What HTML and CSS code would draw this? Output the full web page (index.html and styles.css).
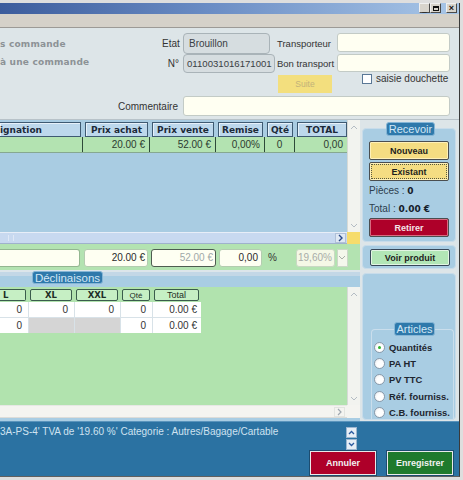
FILE: index.html
```html
<!DOCTYPE html>
<html>
<head>
<meta charset="utf-8">
<link rel="stylesheet" href="styles.css">
</head>
<body>
<div class="window">
  <div class="titlebar">
    <div class="winbtns">
      <span class="wb">_</span><span class="wb"><i class="sq"></i></span><span class="wb close">×</span>
    </div>
  </div>
  <div class="menubar"></div>

  <div class="header">
    <div class="lefttext r1">s commande</div>
    <div class="lbl r1">Etat</div>
    <div class="box etat r1">Brouillon</div>
    <div class="lbl2 r1">Transporteur</div>
    <div class="inp r1 tr">&nbsp;</div>

    <div class="lefttext r2 up">à une commande</div>
    <div class="lbl r2">N°</div>
    <div class="box num r2">0110031016171001</div>
    <div class="lbl2 r2">Bon transport</div>
    <div class="inp r2 bt">&nbsp;</div>

    <div class="suite">Suite</div>
    <div class="chk"><span class="cbox"></span><span>saisie douchette</span></div>

    <div class="comlbl">Commentaire</div>
    <div class="inp cominp">&nbsp;</div>
  </div>
  <div class="sep"></div>

  <div class="rowa">
    <div class="tablebox">
      <div class="tcontent">
        <div class="thead">
          <div class="th first">ignation</div>
          <div class="th">Prix achat</div>
          <div class="th">Prix vente</div>
          <div class="th">Remise</div>
          <div class="th">Qté</div>
          <div class="th last">TOTAL</div>
        </div>
        <div class="trow">
          <div class="td"></div>
          <div class="td">20.00 €</div>
          <div class="td">52.00 €</div>
          <div class="td">0,00%</div>
          <div class="td c">0</div>
          <div class="td">0,00</div>
        </div>
      </div>
      <div class="vscroll">
        <svg width="8" height="6" viewBox="0 0 8 6"><polyline points="1,5 4,2 7,5" fill="none" stroke="#b4bcc4" stroke-width="1"/></svg>
        <svg width="8" height="6" viewBox="0 0 8 6"><polyline points="1,1 4,4 7,1" fill="none" stroke="#b4bcc4" stroke-width="1"/></svg>
      </div>
      <div class="hscroll">
        <span class="grip"></span>
        <span class="hbtn"><svg width="6" height="8" viewBox="0 0 6 8"><polyline points="1,1 4,4 1,7" fill="none" stroke="#2a4a8a" stroke-width="1.4"/></svg></span>
      </div>
      <div class="corner"></div>
    </div>
    <div class="side sidea">
      <div class="panel recv">
        <div class="tag recvtag">Recevoir</div>
        <div class="btn yellow">Nouveau</div>
        <div class="btn yellow focus">Existant</div>
        <div class="stat s1">Pièces : <b>0</b></div>
        <div class="stat s2">Total : <b>0.00 €</b></div>
        <div class="btn red">Retirer</div>
      </div>
    </div>
  </div>

  <div class="rowb">
    <div class="bleft">
      <div class="fi f1"></div>
      <div class="fi f2">20.00 €</div>
      <div class="fi f3">52.00 €</div>
      <div class="fi f4">0,00</div>
      <div class="pct">%</div>
      <div class="fi f5">19,60%</div>
      <div class="dd"><svg width="8" height="6" viewBox="0 0 8 6"><polyline points="1,1 4,4 7,1" fill="none" stroke="#a8b0a8" stroke-width="1"/></svg></div>
    </div>
    <div class="side sideb">
      <div class="panel pb">
        <div class="btn green">Voir produit</div>
      </div>
    </div>
  </div>

  <div class="rowc">
    <div class="cleft">
      <div class="band"><div class="tag decltag">Déclinaisons</div></div>
      <div class="declbox">
        <div class="dcontent">
          <div class="dhead">
            <div class="dh dl">L</div>
            <div class="dh">XL</div>
            <div class="dh">XXL</div>
            <div class="dh small">Qté</div>
            <div class="dh reg">Total</div>
          </div>
          <div class="dgrid">
            <div class="dc">0</div><div class="dc">0</div><div class="dc">0</div><div class="dc">0</div><div class="dc">0.00 €</div>
            <div class="dc">0</div><div class="dc gray"></div><div class="dc gray"></div><div class="dc">0</div><div class="dc">0.00 €</div>
          </div>
        </div>
        <div class="vscroll">
          <svg width="8" height="6" viewBox="0 0 8 6"><polyline points="1,5 4,2 7,5" fill="none" stroke="#b4bcc4" stroke-width="1"/></svg>
          <svg width="8" height="6" viewBox="0 0 8 6"><polyline points="1,1 4,4 7,1" fill="none" stroke="#b4bcc4" stroke-width="1"/></svg>
        </div>
        <div class="hscroll light">
          <span class="hbtn"><svg width="6" height="8" viewBox="0 0 6 8"><polyline points="1,1 4,4 1,7" fill="none" stroke="#a0a8b0" stroke-width="1.2"/></svg></span>
        </div>
        <div class="corner2"></div>
      </div>
    </div>
    <div class="side sidec">
      <div class="panel pc">
        <div class="fieldset">
          <div class="tag arttag">Articles</div>
          <div class="radio on"><span class="rd"></span>Quantités</div>
          <div class="radio"><span class="rd"></span>PA HT</div>
          <div class="radio"><span class="rd"></span>PV TTC</div>
          <div class="radio"><span class="rd"></span>Réf. fourniss.</div>
          <div class="radio"><span class="rd"></span>C.B. fourniss.</div>
        </div>
      </div>
    </div>
  </div>

  <div class="footer">
    <div class="frow">
      <div class="ftext">3A-PS-4' TVA de '19.60 %' Categorie : Autres/Bagage/Cartable</div>
      <div class="spin">
        <span class="sb"><svg width="7" height="5" viewBox="0 0 7 5"><polyline points="1,4 3.5,1.5 6,4" fill="none" stroke="#2a5aa0" stroke-width="1.3"/></svg></span>
        <span class="sb"><svg width="7" height="5" viewBox="0 0 7 5"><polyline points="1,1 3.5,3.5 6,1" fill="none" stroke="#2a5aa0" stroke-width="1.3"/></svg></span>
      </div>
    </div>
    <div class="fbtns">
      <div class="fbtn cancel">Annuler</div>
      <div class="fbtn save">Enregistrer</div>
    </div>
  </div>
</div>
</body>
</html>
```

FILE: styles.css
```css
* { box-sizing: border-box; }
html, body { margin: 0; padding: 0; }
body {
  width: 463px; height: 480px; overflow: hidden;
  background: #dedede;
  font-family: "Liberation Sans", Arial, sans-serif;
  font-size: 10px; color: #2a3238;
}
.window {
  margin-top: 3px;
  width: 460px; height: 474px;
  border-right: 1px solid #3a3a3a;
  border-bottom: 1px solid #606060;
  display: flex; flex-direction: column;
  background: #dde5e8;
}
.titlebar {
  height: 11px; flex: none;
  background: linear-gradient(90deg, #3c5c9c 0%, #6a8cc4 45%, #a9c7e8 100%);
  display: flex; justify-content: flex-end; padding-right: 2px;
}
.winbtns { display: flex; height: 10px; }
.wb {
  width: 11px; height: 10px; background: #d8d4cc;
  border: 1px solid #4a4a4a; border-top-color: #f0f0f0; border-left-color: #f0f0f0;
  font-size: 8px; line-height: 7px; text-align: center; color: #111;
  display: flex; align-items: center; justify-content: center;
}
.wb .sq { width: 6px; height: 5px; border: 1px solid #111; border-top-width: 2px; display: block; }
.wb.close { margin-left: 5px; font-weight: bold; font-size: 9px; }
.menubar { height: 14px; flex: none; background: #d5d1c9; border-bottom: 1px solid #9c9a96; }

.header {
  height: 91px; flex: none;
  padding-top: 5px;
  display: grid;
  grid-template-columns: 162px 21px 92px 62px 113px;
  grid-template-rows: 21px 19px 21px 22px;
  align-items: center;
}
.lefttext {
  font-family: "DejaVu Sans", sans-serif; font-weight: bold; font-size: 9px;
  color: #8c9296; white-space: nowrap; letter-spacing: 0.2px;
}
.lefttext.up { padding-bottom: 4px; }
.lbl { text-align: right; padding-right: 4px; font-size: 10px; color: #333; }
.lbl2 { padding-left: 2px; font-size: 9.5px; color: #333; white-space: nowrap; }
.box {
  background: #d6dde0; border: 1px solid #a9b3b8; border-radius: 4px;
  padding-left: 5px; color: #3a4044; font-size: 10px; white-space: nowrap; overflow: visible;
  display: flex; align-items: center;
}
.box.etat { width: 87px; height: 21px; }
.box.num { width: 92px; height: 19px; padding-left: 3px; font-size: 9.6px; }
.inp {
  background: #fffff2; border: 1px solid #c3cbc6; border-radius: 3px;
}
.inp.tr { height: 19px; align-self: start; }
.inp.bt { height: 18px; align-self: start; }
.suite {
  grid-column: 4; grid-row: 3; align-self: start;
  margin-top: 2px; margin-left: 3px; width: 54px; height: 18px;
  background: #f3df7e; color: #c2b27a; font-size: 8.5px;
  display: flex; align-items: center; justify-content: center;
}
.chk {
  grid-column: 5; grid-row: 3; align-self: start;
  padding-left: 25px; display: flex; align-items: center; gap: 4px;
  font-size: 10px; color: #333; white-space: nowrap;
}
.cbox { width: 10px; height: 10px; background: #fff; border: 1px solid #5a7896; display: block; flex: none; }
.comlbl { grid-column: 1 / 3; grid-row: 4; text-align: right; padding-right: 5px; padding-top: 2px; color: #333; }
.cominp { grid-column: 3 / 6; grid-row: 4; height: 20px; align-self: start; margin-top: 2px; }
.sep { height: 1px; flex: none; background: #b8c2c8; }

/* row A */
.rowa { height: 124px; flex: none; display: flex; }
.tablebox {
  width: 360px; display: grid;
  grid-template-columns: 347px 13px; grid-template-rows: 112px 12px;
}
.tcontent { background: #a9cce2; padding-top: 2px; }
.thead, .trow { display: grid; grid-template-columns: 83px 67px 66px 49px 30px 52px; }
.th {
  height: 15px; margin: 0 2px 0 2px;
  background: #bdd8ec; border: 1px solid #3e5a72;
  box-shadow: inset 1px 1px 0 #e6f1fa;
  font-family: "DejaVu Sans", sans-serif; font-weight: bold; font-size: 9px; color: #1c2a38;
  display: flex; align-items: center; justify-content: center; white-space: nowrap;
}
.th.first { margin-left: 0; justify-content: flex-start; padding-left: 0; border-left: none; }
.th.last { margin-right: 0; }
.trow { height: 16px; margin-top: 0; background: #b3e3b1; border-bottom: 1px solid #86a890; }
.td {
  border-right: 1px solid #2e4a3a; text-align: right; padding-right: 4px;
  font-size: 10px; color: #2c3a30; line-height: 15px; white-space: nowrap;
}
.td:last-child { border-right: none; }
.td.c { text-align: center; padding-right: 0; }
.vscroll {
  background: #f2f3ef; border-left: 1px solid #d6dad6;
  display: flex; flex-direction: column; justify-content: space-between; align-items: center;
  padding: 4px 0 3px;
}
.hscroll {
  background: #c8d9f0; border-top: 1px solid #e8eef8; border-bottom: 1px solid #9fb2cc;
  display: flex; align-items: center; justify-content: space-between; padding-right: 1px;
}
.hscroll .grip { width: 6px; height: 6px; margin-left: 8px; border-left: 1px solid #dfe8f6; border-right: 1px solid #dfe8f6; }
.hbtn {
  width: 11px; height: 10px; background: #dfe8f4; border: 1px solid #b0c0d8;
  display: flex; align-items: center; justify-content: center;
}
.corner { background: #f6dc6c; }

.side { width: 99px; flex: none; }
.sidea { padding: 8px 3px 2px 2px; }
.panel {
  position: relative; height: 100%;
  background: #a9cde3; border: 1px solid #c8dcea; border-radius: 4px;
}
.recv { padding: 12px 0 0 6px; }
.tag {
  position: absolute;
  background: #2f79ab; color: #d2e7f6; border: 1px solid #86b6d6; border-radius: 3px;
  font-size: 11px; line-height: 12px; text-align: center; white-space: nowrap;
}
.recvtag { top: -7px; left: 23px; width: 49px; height: 14px; }
.btn {
  width: 80px; height: 19px;
  border: 1px solid #4a4e50; border-radius: 2px;
  font-size: 9px; font-weight: bold; color: #1e1e1e;
  display: flex; align-items: center; justify-content: center;
}
.btn.yellow { background: #f5dd82; box-shadow: inset 0 0 0 1px #fff1b8; }
.btn.yellow + .btn.yellow { margin-top: 2px; }
.btn.focus { outline: 1px dotted #5a5a40; outline-offset: -3px; }
.btn.red { background: #ae0029; color: #f4e4e8; box-shadow: inset 0 0 0 1px #d86a80; margin-top: 3px; }
.stat { font-size: 10px; color: #2d3e4e; line-height: 12px; }
.stat b { font-family: "DejaVu Sans", sans-serif; font-size: 9px; color: #15202a; }
.s1 { margin-top: 4px; }
.s2 { margin-top: 6px; }

/* row B */
.rowb { height: 26px; flex: none; display: flex; }
.bleft {
  width: 360px; background: #b3e3b1; padding-top: 5px;
  display: flex; align-items: flex-start;
}
.fi {
  height: 18px; background: #fefff2; border: 1px solid #b4ccb0; border-radius: 3px;
  font-size: 10px; color: #2a2a2a; text-align: right; padding-right: 2px; line-height: 16px;
  white-space: nowrap;
}
.f1 { width: 80px; border-left: none; border-radius: 0 3px 3px 0; border-color: #93b690; }
.f2 { width: 64px; margin-left: 4px; }
.f3 { width: 65px; margin-left: 3px; border-color: #4e5c50; color: #a0a8a8; }
.f4 { width: 43px; margin-left: 3px; padding-right: 3px; }
.pct { margin-left: 6px; line-height: 18px; color: #333; font-size: 10px; }
.f5 { width: 39px; margin-left: 19px; background: #f4f8e6; border-color: #cad8c4; color: #a8aca8; }
.dd {
  width: 11px; height: 18px; margin-left: 2px; background: #f4f8ec; border: 1px solid #ccd8c8;
  display: flex; align-items: center; justify-content: center;
}
.sideb { padding: 1px 3px 1px 2px; }
.pb { padding: 3px 0 0 7px; }
.btn.green { background: #b2e6b6; height: 17px; border-color: #38485a; box-shadow: inset 0 0 0 1px #e2f6e4; }

/* row C */
.rowc { height: 151px; flex: none; display: flex; }
.cleft { width: 360px; display: flex; flex-direction: column; }
.band {
  position: relative; height: 17px; flex: none;
  background: linear-gradient(#dce5ea 0 2px, #c3d7e6 2px 6px, #a9cde3 6px);
}
.decltag { top: 1px; left: 32px; width: 71px; height: 13px; font-size: 11.5px; }
.declbox {
  display: grid; grid-template-columns: 347px 13px; grid-template-rows: 118px 13px;
  border-bottom: 3px solid #a9cde3;
}
.dcontent { background: #b1e3ae; padding-top: 2px; }
.dhead { display: grid; grid-template-columns: 28px 46px 46px 32px 48px; width: 200px; }
.dh {
  height: 12px; margin: 0 2px;
  background: #c6efc4; border: 1px solid #3a5c4c; border-radius: 2px;
  font-family: "DejaVu Sans", sans-serif; font-weight: bold; font-size: 8.5px; color: #1e2e26;
  display: flex; align-items: center; justify-content: center;
}
.dh:first-child { margin-left: 0; border-left: none; border-radius: 0 2px 2px 0; }
.dh.dl { justify-content: flex-start; padding-left: 3px; }
.dh:last-child { margin-right: 1px; }
.dh.small { font-weight: normal; font-family: "Liberation Sans", sans-serif; font-size: 8px; }
.dh.reg { font-weight: normal; font-family: "Liberation Sans", sans-serif; font-size: 9px; }
.dgrid {
  margin-top: 1px; width: 201px;
  display: grid; grid-template-columns: 28px 45px 45px 31px 48px; grid-auto-rows: 15px;
  gap: 1px; background: #d8e2e8;
}
.dc {
  background: #fff; text-align: right; padding-right: 6px;
  font-size: 10px; line-height: 15px; color: #333;
}
.dc:nth-child(5n) { padding-right: 4px; }
.dc.gray { background: #d5d5d5; }
.hscroll.light { background: #f4f4f0; border-top: 1px solid #e6e8e4; border-bottom: 1px solid #dcdcd8; }
.hscroll.light { justify-content: flex-end; }
.hscroll.light .hbtn { background: #f4f4f0; border-color: #e2e4e0; margin-right: 1px; }
.corner2 { background: #f4f4f0; }
.sidec { padding: 3px 3px 1px 2px; }
.pc { padding: 55px 1px 0 8px; }
.fieldset {
  position: relative; height: 100%;
  border: 1px solid #cadeec; border-bottom: none; border-radius: 4px 4px 0 0;
  padding-top: 9px; padding-left: 2px;
}
.arttag { top: -8px; left: 22px; width: 41px; height: 14px; font-size: 11px; }
.radio {
  display: flex; align-items: center; gap: 4px; height: 16.3px;
  font-size: 9.4px; font-weight: bold; color: #1e2630; white-space: nowrap;
}
.rd {
  width: 11px; height: 11px; border-radius: 50%; flex: none;
  background: radial-gradient(circle at 60% 60%, #ffffff 40%, #e4e8ec 100%);
  border: 1px solid #8a9aaa; position: relative;
}
.radio.on .rd::after {
  content: ""; position: absolute; left: 3px; top: 3px; width: 3px; height: 3px;
  border-radius: 50%; background: #2fb32f;
}

/* footer */
.footer {
  height: 55px; flex: none; background: #2b72a2;
  border-top: 1px solid #5a94bc;
}
.frow { display: flex; padding-top: 5px; height: 28px; }
.ftext {
  width: 346px; color: #cfe2f0; font-size: 10px; white-space: nowrap; overflow: hidden;
  margin-top: -1px; line-height: 12px;
}
.spin { display: flex; flex-direction: column; gap: 1px; }
.sb {
  width: 11px; height: 11px; background: #e6eef6; border: 1px solid #9cb6d0;
  display: flex; align-items: center; justify-content: center;
}
.fbtns { display: flex; justify-content: flex-end; gap: 11px; padding-right: 6px; margin-top: 1px; }
.fbtn {
  width: 66px; height: 24px;
  border: 1px solid #eaeaea; outline: 1px solid #1c4c70;
  font-size: 9px; font-weight: bold; color: #f2f2f2;
  display: flex; align-items: center; justify-content: center;
}
.fbtn.cancel { background: #ae0029; }
.fbtn.save { background: #1f7a2c; }
```
